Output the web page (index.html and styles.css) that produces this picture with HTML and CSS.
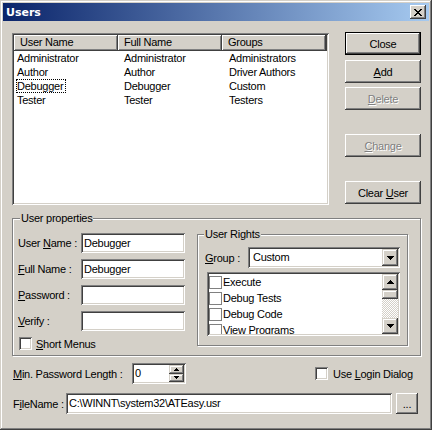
FILE: index.html
```html
<!DOCTYPE html>
<html>
  <head>
    <title>Users</title>
    <link rel="stylesheet" href="styles.css">
  </head>
  <body>
    <div class="window">
      <div class="titlebar">
        <span class="title">Users</span>
        <button class="caption-btn">
          <svg width="8" height="7" viewBox="0 0 8 7"><path d="M0 0h2v1H0z M6 0h2v1H6z M1 1h2v1H1z M5 1h2v1H5z M2 2h4v1H2z M3 3h2v1H3z M2 4h4v1H2z M1 5h2v1H1z M5 5h2v1H5z M0 6h2v1H0z M6 6h2v1H6z"/></svg>
        </button>
      </div>

      <div class="body">
        <div class="top">
          <div class="listview sunken">
            <div class="lv-header">
              <div class="hd c1">User Name</div>
              <div class="hd c2">Full Name</div>
              <div class="hd c3">Groups</div>
              <div class="hd rest"></div>
            </div>
            <div class="lv-row"><span class="c1">Administrator</span><span class="c2">Administrator</span><span class="c3">Administrators</span></div>
            <div class="lv-row"><span class="c1">Author</span><span class="c2">Author</span><span class="c3">Driver Authors</span></div>
            <div class="lv-row"><span class="c1"><span class="focus">Debugger</span></span><span class="c2">Debugger</span><span class="c3">Custom</span></div>
            <div class="lv-row"><span class="c1">Tester</span><span class="c2">Tester</span><span class="c3">Testers</span></div>
          </div>

          <div class="side-buttons">
            <button class="btn default">Close</button>
            <button class="btn"><u>A</u>dd</button>
            <button class="btn" disabled><u>D</u>elete</button>
            <button class="btn far" disabled><u>C</u>hange</button>
            <button class="btn far">Clear <u>U</u>ser</button>
          </div>
        </div>

        <div class="group props">
          <span class="group-title">User properties</span>
          <div class="fields">
            <div class="field-row">
              <label>User <u>N</u>ame :</label>
              <div class="textbox sunken">Debugger</div>
            </div>
            <div class="field-row">
              <label><u>F</u>ull Name :</label>
              <div class="textbox sunken">Debugger</div>
            </div>
            <div class="field-row">
              <label><u>P</u>assword :</label>
              <div class="textbox sunken"></div>
            </div>
            <div class="field-row">
              <label><u>V</u>erify :</label>
              <div class="textbox sunken"></div>
            </div>
            <div class="check-row">
              <span class="checkbox sunken"></span>
              <span><u>S</u>hort Menus</span>
            </div>
          </div>

          <div class="group rights">
            <span class="group-title">User Rights</span>
            <div class="combo-row">
              <label><u>G</u>roup :</label>
              <div class="combo sunken">
                <span class="combo-text">Custom</span>
                <span class="combo-btn raised">
                  <svg width="7" height="4" viewBox="0 0 7 4"><path d="M0 0h7v1H0z M1 1h5v1H1z M2 2h3v1H2z M3 3h1v1H3z"/></svg>
                </span>
              </div>
            </div>
            <div class="checklist sunken">
              <div class="items">
                <div class="item"><span class="flatbox"></span>Execute</div>
                <div class="item"><span class="flatbox"></span>Debug Tests</div>
                <div class="item"><span class="flatbox"></span>Debug Code</div>
                <div class="item"><span class="flatbox"></span>View Programs</div>
              </div>
              <div class="scrollbar">
                <span class="sb-btn raised">
                  <svg width="7" height="4" viewBox="0 0 7 4"><path d="M3 0h1v1H3z M2 1h3v1H2z M1 2h5v1H1z M0 3h7v1H0z"/></svg>
                </span>
                <span class="sb-thumb raised"></span>
                <span class="sb-track"></span>
                <span class="sb-btn raised">
                  <svg width="7" height="4" viewBox="0 0 7 4"><path d="M0 0h7v1H0z M1 1h5v1H1z M2 2h3v1H2z M3 3h1v1H3z"/></svg>
                </span>
              </div>
            </div>
          </div>
        </div>

        <div class="min-row">
          <label><u>M</u>in. Password Length :</label>
          <div class="spin sunken">
            <span class="spin-text">0</span>
            <span class="spin-btns">
              <span class="spin-btn raised"><svg width="5" height="3" viewBox="0 0 5 3"><path d="M2 0h1v1H2z M1 1h3v1H1z M0 2h5v1H0z"/></svg></span>
              <span class="spin-btn raised"><svg width="5" height="3" viewBox="0 0 5 3"><path d="M0 0h5v1H0z M1 1h3v1H1z M2 2h1v1H2z"/></svg></span>
            </span>
          </div>
          <span class="checkbox sunken login-box"></span>
          <span>Use <u>L</u>ogin Dialog</span>
        </div>

        <div class="file-row">
          <label>F<u>i</u>leName :</label>
          <div class="filebox sunken">C:\WINNT\system32\ATEasy.usr</div>
          <button class="btn browse">...</button>
        </div>
      </div>
    </div>
  </body>
</html>
```

FILE: styles.css
```css
* {
  box-sizing: border-box;
}

body, html {
  margin: 0;
  padding: 0;
}

body {
  background: #d4d0c8;
  font-family: "Liberation Sans", Arial, sans-serif;
  font-size: 11px;
  letter-spacing: -0.25px;
  color: #000;
}

u {
  text-decoration: underline;
}

label {
  white-space: nowrap;
}

.sunken {
  background: #fff;
  box-shadow: inset 1px 1px #808080, inset -1px -1px #fff, inset 2px 2px #404040, inset -2px -2px #d4d0c8;
}

.raised {
  background: #d4d0c8;
  box-shadow: inset -1px -1px #404040, inset 1px 1px #d4d0c8, inset -2px -2px #808080, inset 2px 2px #fff;
}

.window {
  width: 432px;
  height: 430px;
  padding: 3px;
  background: #d4d0c8;
  box-shadow: inset -1px -1px #404040, inset 1px 1px #d4d0c8, inset -2px -2px #808080, inset 2px 2px #fff;
}

/* title bar */
.titlebar {
  height: 18px;
  display: flex;
  align-items: center;
  justify-content: space-between;
  padding: 0 3px 0 3px;
  background: linear-gradient(to right, #0a246a, #a6caf0);
}

.title {
  color: #fff;
  font: bold 11px "DejaVu Sans", sans-serif;
  letter-spacing: 0;
}

.caption-btn {
  width: 16px;
  height: 14px;
  padding: 0;
  border: 0;
  display: flex;
  align-items: center;
  justify-content: center;
  background: #d4d0c8;
  box-shadow: inset -1px -1px #404040, inset 1px 1px #fff, inset -2px -2px #808080;
}

.body {
  padding: 12px 8px 0 9px;
}

.top {
  display: flex;
  align-items: flex-start;
}

/* list view */
.listview {
  width: 317px;
  height: 172px;
  padding: 2px;
  overflow: hidden;
}

.lv-header {
  display: flex;
  height: 16px;
}

.hd {
  width: 104px;
  height: 16px;
  line-height: 15px;
  padding-left: 6px;
  background: #d4d0c8;
  box-shadow: inset -1px -1px #404040, inset 1px 1px #fff, inset -2px -2px #808080;
}

.hd.rest {
  flex: 1;
  padding: 0;
}

.lv-row {
  display: flex;
  height: 14px;
  line-height: 14px;
  white-space: nowrap;
}

.lv-row .c1 {
  width: 104px;
  padding-left: 3px;
}

.lv-row .c2 {
  width: 104px;
  padding-left: 6px;
}

.lv-row .c3 {
  padding-left: 7px;
}

.focus {
  display: inline-block;
  height: 14px;
  line-height: 12px;
  margin-left: -1px;
  padding: 0 2px 0 0;
  border: 1px dotted #000;
}

/* buttons */
.side-buttons {
  display: flex;
  flex-direction: column;
  gap: 4px;
  margin-left: 16px;
  margin-top: -1px;
}

.btn {
  width: 76px;
  height: 23px;
  padding: 0;
  border: 0;
  font: 11px "Liberation Sans", Arial, sans-serif;
  letter-spacing: -0.25px;
  color: #000;
  background: #d4d0c8;
  box-shadow: inset -1px -1px #404040, inset 1px 1px #fff, inset -2px -2px #808080, inset 2px 2px #d4d0c8;
}

.btn.default {
  margin-bottom: 1px;
  box-shadow: inset 0 0 0 1px #000, inset -2px -2px #404040, inset 2px 2px #fff, inset -3px -3px #808080;
}

.btn[disabled] {
  color: #808080;
  text-shadow: 1px 1px #fff;
}

.btn.far {
  margin-top: 20px;
}

/* group boxes */
.group {
  position: relative;
  border: 1px solid #808080;
  box-shadow: inset 1px 1px #fff, 1px 1px #fff;
}

.group-title {
  position: absolute;
  top: -7px;
  left: 7px;
  padding: 0 1px;
  line-height: 13px;
  background: #d4d0c8;
  white-space: nowrap;
}

.props {
  width: 409px;
  height: 138px;
  margin-top: 13px;
  padding: 14px 0 0 5px;
  display: flex;
  align-items: flex-start;
}

.fields {
  width: 168px;
}

.field-row {
  display: flex;
  align-items: center;
  height: 20px;
  margin-bottom: 6px;
}

.field-row label {
  width: 63px;
}

.textbox {
  width: 104px;
  height: 20px;
  line-height: 20px;
  padding: 0 3px;
}

.check-row {
  display: flex;
  align-items: center;
  height: 13px;
  margin-left: 1px;
}

.checkbox {
  width: 13px;
  height: 13px;
  margin-right: 4px;
  flex: none;
}

.rights {
  width: 211px;
  height: 112px;
  margin-left: 11px;
  margin-top: 1px;
  padding: 12px 0 0 7px;
}

.rights .group-title {
  left: 6px;
}

.combo-row {
  display: flex;
  align-items: center;
  height: 21px;
}

.combo-row label {
  width: 43px;
}

.combo {
  width: 152px;
  height: 21px;
  padding: 2px;
  display: flex;
}

.combo-text {
  flex: 1;
  line-height: 17px;
  padding-left: 3px;
}

.combo-btn {
  width: 16px;
  height: 17px;
  display: flex;
  align-items: center;
  justify-content: center;
}

.checklist {
  width: 193px;
  height: 64px;
  margin: 4px 0 0 2px;
  padding: 2px;
  display: flex;
}

.items {
  flex: 1;
  overflow: hidden;
}

.item {
  display: flex;
  align-items: center;
  height: 16px;
  white-space: nowrap;
}

.flatbox {
  width: 13px;
  height: 13px;
  margin: 0 1px 0 0;
  border: 1px solid #808080;
  background: #fff;
}

.scrollbar {
  width: 16px;
  display: flex;
  flex-direction: column;
}

.sb-btn {
  height: 16px;
  display: flex;
  align-items: center;
  justify-content: center;
}

.sb-thumb {
  height: 9px;
}

.sb-track {
  flex: 1;
  background: repeating-conic-gradient(#fff 0 25%, #d4d0c8 0 50%) 0 0 / 2px 2px;
}

/* bottom rows */
.min-row {
  display: flex;
  align-items: center;
  height: 21px;
  margin-top: 7px;
  padding-left: 1px;
}

.min-row label {
  width: 119px;
}

.spin {
  width: 54px;
  height: 21px;
  padding: 2px;
  display: flex;
}

.spin-text {
  flex: 1;
  line-height: 17px;
  padding-left: 1px;
}

.spin-btns {
  width: 15px;
  display: flex;
  flex-direction: column;
}

.spin-btn {
  flex: 1;
  display: flex;
  align-items: center;
  justify-content: center;
}

.login-box {
  margin-left: 129px;
  margin-right: 5px;
}

.file-row {
  display: flex;
  align-items: center;
  height: 21px;
  margin-top: 9px;
  padding-left: 1px;
}

.file-row label {
  width: 53px;
}

.filebox {
  width: 326px;
  height: 21px;
  line-height: 21px;
  padding: 0 3px;
  white-space: nowrap;
}

.btn.browse {
  width: 22px;
  height: 21px;
  margin-left: 4px;
}
```
